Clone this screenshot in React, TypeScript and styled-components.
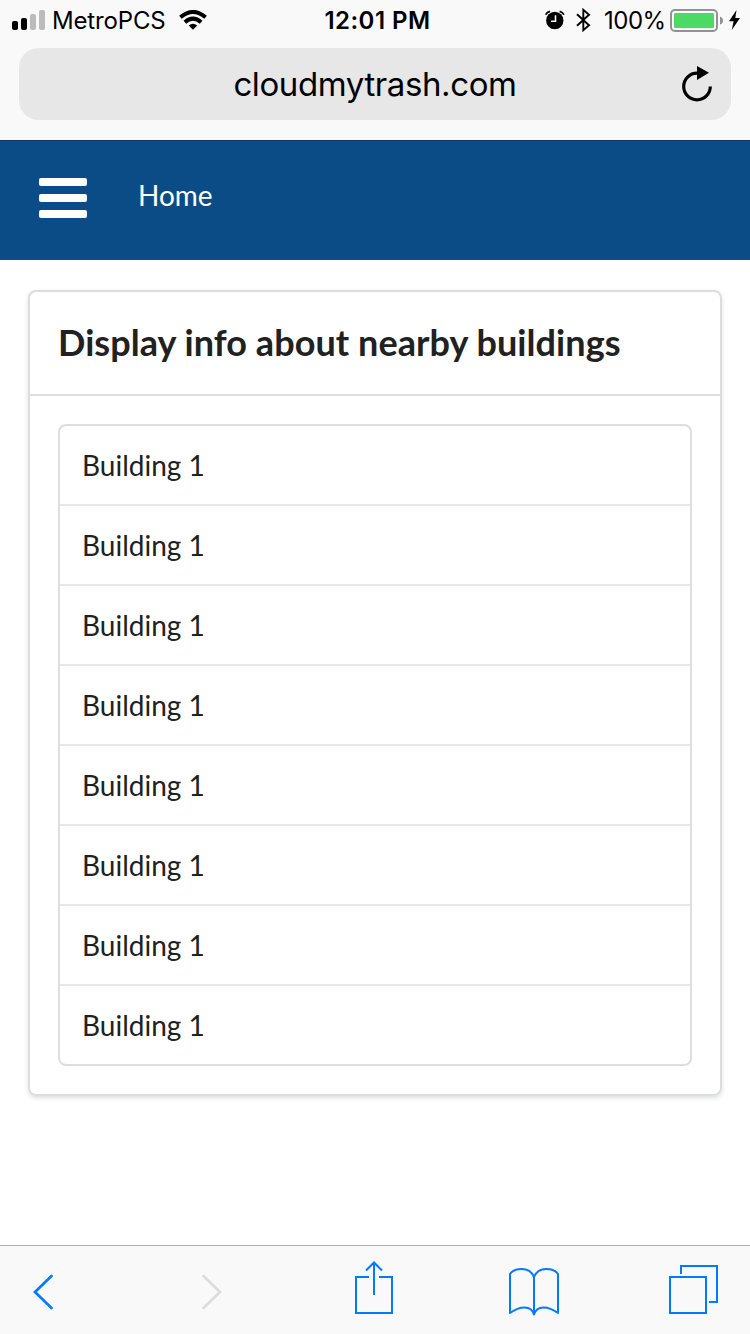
import React from "react";
import styled, { createGlobalStyle } from "styled-components";

const GlobalStyle = createGlobalStyle`
  * { box-sizing: border-box; }
  body { margin: 0; background: #fff; }
`;

const Screen = styled.div`
  width: 750px;
  height: 1334px;
  display: flex;
  flex-direction: column;
  overflow: hidden;
  background: #fff;
  font-family: Lato, sans-serif;
  color: #212121;
`;

const BrowserTop = styled.header`
  height: 140px;
  background: #f9f9f9;
  font-family: Inter, sans-serif;
  color: #000;
`;

const StatusBar = styled.div`
  height: 48px;
  padding: 0 10px 8px 12px;
  display: grid;
  grid-template-columns: 1fr auto 1fr;
  grid-template-rows: 40px;
  align-items: center;
  font-size: 24px;
  line-height: 40px;
  white-space: nowrap;
`;

const StatusGroup = styled.div<{ $end?: boolean }>`
  height: 40px;
  display: flex;
  align-items: center;
  justify-content: ${(p) => (p.$end ? "flex-end" : "flex-start")};
  svg { display: block; flex: none; }
`;

const Carrier = styled.span`
  width: 127px;
  padding: 2px 0 0 6px;
  letter-spacing: -0.15px;
`;

const Clock = styled.span`
  font-weight: 600;
  letter-spacing: 0.45px;
  padding: 2px 0 0 3px;
`;

const Percent = styled.span`
  width: 66px;
  margin-left: 13px;
  padding-top: 2px;
  letter-spacing: -0.5px;
`;

const AddressBar = styled.div`
  height: 72px;
  margin: 0 19px;
  padding: 0 17px 0 49px;
  border-radius: 20px;
  background: #e7e7e7;
  display: flex;
  align-items: center;
`;

const Address = styled.span`
  flex: 1;
  text-align: center;
  font-size: 33px;
  letter-spacing: -0.4px;
  line-height: 72px;
`;

const NavBar = styled.nav`
  height: 120px;
  padding: 0 39px;
  display: flex;
  align-items: center;
  gap: 51px;
  background: #0b4c86;
  border-top: 1px solid #093a66;
`;

const MenuButton = styled.div`
  width: 48px;
  margin-top: -5px;
  display: flex;
  flex-direction: column;
  gap: 8px;
`;

const MenuBar = styled.span`
  height: 8px;
  border-radius: 2px;
  background: #fff;
`;

const NavLink = styled.span`
  font-size: 28px;
  line-height: 40px;
  color: #fff;
  margin-top: -11px;
`;

const Main = styled.main`
  flex: 1;
  padding: 30px 28px;
`;

const Card = styled.section`
  border: 2px solid #dcdddd;
  border-radius: 8px;
  box-shadow: 0 2px 4px rgba(34, 36, 38, 0.15);
`;

const CardTitle = styled.h1`
  height: 104px;
  margin: 0;
  padding: 0 28px;
  border-bottom: 2px solid #dedede;
  font-size: 36px;
  font-weight: 700;
  letter-spacing: 0.065px;
  line-height: 100px;
  white-space: nowrap;
`;

const List = styled.ul`
  list-style: none;
  margin: 28px;
  padding: 0;
  border: 2px solid #dedede;
  border-radius: 8px;
`;

const ListItem = styled.li`
  height: 80px;
  padding: 0 22px;
  font-size: 28px;
  line-height: 78px;
  border-bottom: 2px solid #e8e8e9;
  &:last-child { height: 78px; border-bottom: 0; }
`;

const Toolbar = styled.footer`
  height: 89px;
  padding: 15px 31px 0 32px;
  display: grid;
  grid-template-columns: 169px 153px 154px 160px auto;
  align-items: start;
  background: #f9f9f9;
  border-top: 1px solid #acacac;
`;

const ToolIcon = styled.svg<{ $disabled?: boolean; $weight?: number }>`
  display: block;
  fill: none;
  stroke: ${(p) => (p.$disabled ? "#dcdcdc" : "#007aff")};
  stroke-width: ${(p) => p.$weight ?? 2};
`;

const buildings = Array.from({ length: 8 }, () => "Building 1");

const Signal = () => (
  <svg width="34" height="20" viewBox="0 0 34 20">
    <rect x="0" y="11" width="6" height="9" rx="2" />
    <rect x="9" y="8" width="6" height="12" rx="2" />
    <rect x="18" y="4" width="6" height="16" rx="2" fill="#bbb" />
    <rect x="27" y="0" width="6" height="20" rx="2" fill="#bbb" />
  </svg>
);

const Wifi = () => (
  <svg width="28" height="20" viewBox="0 0 28 20">
    <g fill="none" stroke="#000" strokeWidth="4">
      <path d="M1.4 7.2Q14 -3.2 26.6 7.2" />
      <path d="M5.9 12.2Q14 5.2 22.1 12.2" />
    </g>
    <path d="M9.8 15.6Q14 12 18.2 15.6L14 19.8Z" />
  </svg>
);

const Alarm = () => (
  <svg width="20" height="20" viewBox="0 0 20 20">
    <circle cx="9.8" cy="10.5" r="8.7" />
    <path d="M.7 4.8Q1.8 2 5 1.3M18.9 4.8Q17.8 2 14.6 1.3" fill="none" stroke="#000" strokeWidth="1.7" />
    <path d="M10.5 5.2v6H6" fill="none" stroke="#f9f9f9" strokeWidth="1.6" />
  </svg>
);

const Bluetooth = () => (
  <svg width="15" height="24" viewBox="0 0 15 24">
    <path d="M1 6.3 13 17.3 7.3 22.2V1.8L13 6.7 1 17.7" fill="none" stroke="#000" strokeWidth="1.9" />
  </svg>
);

const Battery = () => (
  <svg width="53" height="24" viewBox="0 0 53 24">
    <rect x="1" y="2" width="46" height="21" rx="4" fill="#fff" stroke="#929292" strokeWidth="2" />
    <rect x="4" y="5" width="40" height="15" rx="1.5" fill="#4cd964" />
    <path d="M50 8.5Q53 9.5 53 12.5T50 16.5Z" fill="#929292" />
  </svg>
);

const Bolt = () => (
  <svg width="11" height="20" viewBox="0 0 11 20">
    <path d="M7.5 0 0 11.2H4.6L2.8 20 11 8H6.3Z" />
  </svg>
);

const Reload = () => (
  <svg width="32" height="36" viewBox="0 0 32 36">
    <path d="M28.3 20.5A13.3 13.3 0 1 1 15 7.2H17" fill="none" stroke="#000" strokeWidth="3.2" />
    <path d="M15 0 27 6.7 15 14Z" />
  </svg>
);

const Gap = styled.span<{ $w: number }>`
  flex: none;
  width: ${(p) => p.$w}px;
`;

export default function App() {
  return (
    <Screen>
      <GlobalStyle />
      <BrowserTop>
        <StatusBar>
          <StatusGroup>
            <Signal />
            <Carrier>MetroPCS</Carrier>
            <Gap $w={6} />
            <Wifi />
          </StatusGroup>
          <Clock>12:01 PM</Clock>
          <StatusGroup $end>
            <Alarm />
            <Gap $w={11} />
            <Bluetooth />
            <Percent>100%</Percent>
            <Battery />
            <Gap $w={6} />
            <Bolt />
          </StatusGroup>
        </StatusBar>
        <AddressBar>
          <Address>cloudmytrash.com</Address>
          <Reload />
        </AddressBar>
      </BrowserTop>
      <NavBar>
        <MenuButton>
          <MenuBar />
          <MenuBar />
          <MenuBar />
        </MenuButton>
        <NavLink>Home</NavLink>
      </NavBar>
      <Main>
        <Card>
          <CardTitle>Display info about nearby buildings</CardTitle>
          <List>
            {buildings.map((name, i) => (
              <ListItem key={i}>{name}</ListItem>
            ))}
          </List>
        </Card>
      </Main>
      <Toolbar>
        <ToolIcon $weight={2.7} width="22" height="56" viewBox="32 1261 22 56">
          <path d="M51.5 1276 35 1292 51.5 1308" strokeLinecap="round" />
        </ToolIcon>
        <ToolIcon $disabled $weight={2.7} width="22" height="56" viewBox="201 1261 22 56">
          <path d="M203.5 1276 220 1292 203.5 1308" strokeLinecap="round" />
        </ToolIcon>
        <ToolIcon width="40" height="56" viewBox="354 1261 40 56">
          <path d="M369 1277H356V1313H392V1277H379M374 1295V1262.5M366 1270.5 374 1262.5 382 1270.5" />
        </ToolIcon>
        <ToolIcon width="52" height="56" viewBox="508 1261 52 56">
          <path d="M534 1314.5V1277C532 1272 527 1269 521.5 1269C516 1269 512 1271 510 1274V1313C520 1306 531 1305 534 1314.5C537 1305 548 1306 558 1313V1274C556 1271 552 1269 546.5 1269C541 1269 536 1272 534 1277" strokeLinejoin="round" />
        </ToolIcon>
        <ToolIcon width="51" height="56" viewBox="668 1261 51 56">
          <path d="M670 1277H706V1313H670ZM681 1274V1266H717V1302H709" />
        </ToolIcon>
      </Toolbar>
    </Screen>
  );
}
